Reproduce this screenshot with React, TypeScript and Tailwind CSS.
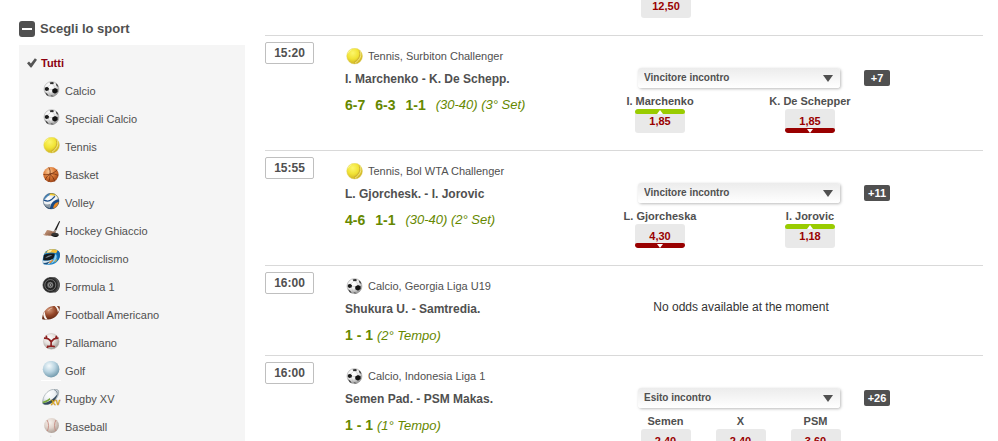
import { useId, useState, type ReactNode } from 'react';

function Icon({ children }: { children: ReactNode }) {
  return (
    <svg viewBox="0 0 20 20" className="h-5 w-5 shrink-0" aria-hidden="true">
      {children}
    </svg>
  );
}

function Shade({ id, from, mid, to }: { id: string; from: string; mid: string; to: string }) {
  return (
    <radialGradient id={id} cx="0.38" cy="0.3" r="0.75">
      <stop offset="0" stopColor={from} />
      <stop offset="0.5" stopColor={mid} />
      <stop offset="1" stopColor={to} />
    </radialGradient>
  );
}

function SoccerIcon() {
  const id = useId();
  return (
    <Icon>
      <Shade id={id} from="#ffffff" mid="#efefef" to="#8c8c8c" />
      <circle cx="10.5" cy="8.1" r="7.5" fill={`url(#${id})`} stroke="#9a9a9a" strokeWidth="0.5" />
      <path d="M3.8 6.8l2.4-1 1.8 1.4-.4 2.3-2.2.6-1.6-1z" fill="#1c1c1c" />
      <path d="M11.2 8.4l2.8-1.5 2.6 1.4v2.8l-2.7 1.6-2.6-1.5z" fill="#111" />
      <path d="M8.7 1.4l2.8-.5 1.7 1.1-1.5 1.3-2.4-.2z" fill="#2b2b2b" />
      <path d="M14.8 2.2l1.8 1.6.7 2.1-1.8-1.2z" fill="#333" />
      <path d="M4.2 11.2l2.2 1.8 1.3 2.1-2-.9z" fill="#333" />
      <path d="M9.4 14.2l2.2.3 1.2.9-2.3.2z" fill="#555" />
      <path d="M8 8.2l3.2.5M9.9 3.2L6.800 5.800M12.100 3.100L14 6.900M7.400 9.600l2 4.600M13.400 12.500l-1.600 2" stroke="#b5b5b5" strokeWidth="0.5" fill="none" />
    </Icon>
  );
}

function TennisIcon() {
  const id = useId();
  return (
    <Icon>
      <Shade id={id} from="#fcf66c" mid="#f1e335" to="#c9ab22" />
      <circle cx="10.6" cy="8.1" r="7.9" fill={`url(#${id})`} stroke="#ddd268" strokeWidth="0.4" />
      <path d="M15 2.6c1.900 3.600.8 8-4.900 11.600" fill="none" stroke="#c9ac31" strokeWidth="0.9" />
      <path d="M16 2.900c1.900 3.900.6 8.600-5 12.200" fill="none" stroke="#f6eda6" strokeWidth="0.7" />
      <path d="M3.900 5.400c.8-1.700 1.900-2.800 3.600-3.600" fill="none" stroke="#fbf8b0" strokeWidth="0.8" />
    </Icon>
  );
}

function BasketIcon() {
  const id = useId();
  return (
    <Icon>
      <Shade id={id} from="#fbcf9f" mid="#de7c38" to="#974015" />
      <circle cx="9.9" cy="9.6" r="7.7" fill={`url(#${id})`} />
      <path
        d="M2.500 9.500c4.500.8 9.500-.6 13.800-4.500M9.200 8.900c3-.4 5.500.2 8 1.600M8.900 9.200c2.500 2 4 4.300 4.800 7.300M8.500 9.300c-2 1.600-3.600 3.500-4.300 5.700M9 9c.4-2.400 0-4.600-1.200-6.600M9 9.500c0 2.500-.3 5-1.300 7.200"
        fill="none"
        stroke="#74300f"
        strokeWidth="0.8"
      />
    </Icon>
  );
}

function VolleyIcon() {
  const id = useId();
  return (
    <Icon>
      <Shade id={id} from="#ffffff" mid="#dde3e8" to="#7f8f9d" />
      <clipPath id={`${id}-ball`}>
        <circle cx="10.1" cy="8.1" r="8" />
      </clipPath>
      <g clipPath={`url(#${id}-ball)`}>
        <rect width="20" height="20" fill={`url(#${id})`} />
        <path d="M2 8C3 3 7-1 12 0L6.500 3.500z" fill="#4a86b8" />
        <path d="M9 0h7l3 6-2.500-1C14 2.500 11.500 2 8.500 2.500z" fill="#f6cb2d" />
        <path d="M3.500 6.500c2.500 1 4.200 1.200 6 .5l5-5 2.500 2.500-5.500 4.800C8.800 11 5 11 2.500 9.500z" fill="#f2f4f5" />
        <path d="M3 7.200c3 1.300 5.500 1.100 7.500-.6l3.500-3.300" fill="none" stroke="#1d4f8b" strokeWidth="1.300" />
        <path d="M9 16c0-5 3-9 9.500-10v4.500C15 11 13.500 13 13 16z" fill="#1b4c86" />
        <path d="M12.200 15.500c.2-3.500 1.800-6 6-6.800V13l-3.500 3z" fill="#ef8a1f" />
        <path d="M1.500 10c3 1.800 5.500 1.800 8 .8L8.500 17H4z" fill="#8e9aa5" />
        <path d="M4 12.800c1.600 1.600 3.600 2.400 6 2.200v2.200H6z" fill="#14355c" />
      </g>
      <circle cx="10.1" cy="8.1" r="7.8" fill="none" stroke="#34506f" strokeWidth="0.5" />
    </Icon>
  );
}

function HockeyIcon() {
  const id = useId();
  return (
    <Icon>
      <linearGradient id={id} x1="0" x2="1" y1="0" y2="1">
        <stop offset="0" stopColor="#cf9f82" />
        <stop offset="1" stopColor="#7c5039" />
      </linearGradient>
      <path d="M18.2 0l.9.5-4.900 11.200-1.700-.8z" fill="#1f1f1f" />
      <path d="M13.700 8.400l1.700.8-1.100 2.700-1.900-.8z" fill="#a99c92" />
      <path d="M3.300 13.500L6 9c2.800 0 5.200 1.600 8 1.700l-1 3.600c-3 1.100-6.400.4-9.700-.8z" fill={`url(#${id})`} />
      <path d="M1.900 12.600c1.200 1 2.900 1.300 4.600 1.500l-1 .7c-1.800 0-3-.7-3.600-2.200z" fill="#b98a6d" />
      <ellipse cx="14" cy="13.500" rx="3.600" ry="1.700" fill="#343434" />
      <path d="M10.400 13.600v.9c1.400 1.900 6 1.900 7.200-.1v-.8c-1.600 1.700-5.600 1.700-7.200 0z" fill="#111" />
    </Icon>
  );
}

function HelmetIcon() {
  return (
    <Icon>
      <path d="M1.900 14.400C1.300 11.500 2 7.400 3.300 4.600 4.500 2 7.500.4 11.500.3c4.600-.1 7.500 1.700 7.500 5.700 0 4.500-3.500 8.600-8.100 9.500-3.600.7-7.600.8-9-1.100z" fill="#1f86cb" />
      <path d="M3.300 4.600C4.500 2 7.500.4 11.500.3c2.200 0 4 .4 5.300 1.300l-1.500 2.600c-4-1.100-8-.6-12 .4z" fill="#f3bf3a" />
      <path d="M7 1.700c1.300-.7 2.700-1 4.300-1L9.500 3l-4 .8z" fill="#fbeeb0" />
      <path d="M4 3.300l2.500-1.900-.8 2.300z" fill="#2b7fbd" />
      <path d="M16.800 1.600c1.400.9 2.100 2.300 2.200 4-.1 2.600-1.100 4.900-2.800 6.700.8-3.800.5-6.600-.9-8.100z" fill="#1767a8" />
      <path d="M2.800 5.900c3.200-1.400 7.200-1.700 10.700-1.300.4 2.300-.7 4.600-2.600 5.700-2.600 1.300-5.800 1.500-8.700.9z" fill="#171a1d" />
      <path d="M4.200 8.900c1.700-2 4.100-2.900 7.100-3-1.600 1.200-3.900 2.500-7.100 3z" fill="#7e8b94" />
      <path d="M14.300 4.900c1.600 1.200 1.700 3.200.6 5.400-1.100 2.200-3 3.800-5 4.300 2-2.300 3.800-5.500 4.400-9.700z" fill="#8fd0f2" />
      <path d="M2 11.500c3.400.5 6.700.2 9.500-1.300-.4 2.200-1.800 3.900-4 5-2.300.4-4.500.2-5.500-.8z" fill="#d7e4ec" />
      <path d="M2.300 13.800c2.400.3 4.800-.2 7.200-2l-3.200 3.500c-1.700.2-3.200 0-4-.7z" fill="#174c7b" />
      <path d="M8 13.300l3.600-2.700.8.500-3.300 3.300z" fill="#f08b27" />
      <path d="M12.700 13.500l3.500-4.300-1 3z" fill="#f3bf3a" />
    </Icon>
  );
}

function WheelIcon() {
  return (
    <Icon>
      <path d="M8.200.3h5.600c3 1.100 5.100 4 5.100 7.600s-2.100 6.600-5.100 7.700H8.200z" fill="#3a3a3a" />
      <path d="M14.500 1.200c2 1.500 3.200 4 3.200 6.900s-1.200 5.400-3.200 6.900" fill="none" stroke="#6a6a6a" strokeWidth="0.7" />
      <circle cx="9.300" cy="8" r="7.500" fill="#262626" stroke="#555" strokeWidth="0.5" />
      <circle cx="9.300" cy="8" r="5.500" fill="none" stroke="#8e8e8e" strokeWidth="0.7" />
      <circle cx="9.300" cy="8" r="3.800" fill="#666" stroke="#161616" strokeWidth="0.9" />
      <circle cx="9.300" cy="8" r="2" fill="#2b2b2b" stroke="#b4b4b4" strokeWidth="0.6" />
      <circle cx="9.300" cy="8" r="0.7" fill="#ddd" />
    </Icon>
  );
}

function FootballIcon() {
  const id = useId();
  return (
    <Icon>
      <Shade id={id} from="#d59a7b" mid="#96482a" to="#57200d" />
      <path d="M1.200 14.300C.9 8.500 5 2 11.300 1.200c2.700-.3 5.300-.3 7.500.3.3 5.800-3.500 11.600-9.400 12.700-2.800.5-6 .7-8.200.1z" fill={`url(#${id})`} />
      <path d="M3.800 6.400c.1 3.200 1 5.900 2.900 8l-2.300.2C2.900 12.600 2.200 10.800 2.200 9z" fill="#f9f5f1" />
      <path d="M13.600 1.100c1.900 1.500 3 3.600 3.300 6.300l1.200-2.200c-.4-1.800-1.100-3.100-2.300-4.100z" fill="#f9f5f1" />
      <path d="M7.300 5.600c1.200-1.500 2.600-2.300 4.100-2.600" stroke="#efc9b4" strokeWidth="0.8" fill="none" />
    </Icon>
  );
}

function HandballIcon() {
  const id = useId();
  return (
    <Icon>
      <Shade id={id} from="#ffffff" mid="#e3deda" to="#97908b" />
      <circle cx="10.300" cy="8.400" r="7.900" fill={`url(#${id})`} stroke="#bbb3ad" strokeWidth="0.4" />
      <path
        d="M3 5.200c2.800-.2 5.600 1.100 7.200 3.800 1.500-2.700 4.100-4 7.200-3.900M10.200 9c-.2 1.700-.2 3.200.1 4.800M6 15l1.200-2.300M7 13.700c2-.9 4.700-.9 6.800 0M5.200 2.600l.6 2.600M15.600 2.700l-.9 2.500"
        fill="none"
        stroke="#8e1f1f"
        strokeWidth="1.6"
      />
    </Icon>
  );
}

function GolfIcon() {
  const id = useId();
  return (
    <Icon>
      <Shade id={id} from="#f4fafc" mid="#b8d3e0" to="#6a93a6" />
      <circle cx="10.1" cy="8.2" r="8.3" fill={`url(#${id})`} />
      <rect y="19" width="20" height="1" fill="#fff" />
    </Icon>
  );
}

function RugbyIcon() {
  const id = useId();
  return (
    <Icon>
      <Shade id={id} from="#ffffff" mid="#eef1f4" to="#9fadb8" />
      <path d="M1.600 14.400C1.200 8.400 5.600 1 12.500.3c2.700-.3 4.800.2 5.100 1.600.9 4.900-3.600 10.900-9 13-2.600 1-5.600 1.100-7-.5z" fill={`url(#${id})`} stroke="#7d8a92" strokeWidth="0.5" />
      <path d="M1.800 14.200c5.700-.7 11.400-4.400 14.900-9.500-.6 4.100-4.100 8.300-8.300 10.200-2.300.9-5.200 1-6.600-.7z" fill="#33485c" />
      <path d="M1.700 12.700c2.600-.6 5-1.900 7-3.700l.7 1.400c-2.200 2-4.600 3.300-7.500 3.900z" fill="#76a83a" />
      <path d="M13.300.8c1.700.7 2.800 2 3 3.800" fill="none" stroke="#51626f" strokeWidth="0.700" />
      <text x="10" y="16" fontSize="7" fontWeight="700" fontFamily="Liberation Sans, sans-serif" fill="#f5c21f" stroke="#a56c00" strokeWidth="0.300">
        XV
      </text>
    </Icon>
  );
}

function BaseballIcon() {
  const id = useId();
  return (
    <Icon>
      <Shade id={id} from="#f7f1ec" mid="#dfd3cb" to="#a99a91" />
      <circle cx="10.500" cy="8.500" r="7.400" fill={`url(#${id})`} />
      <path d="M6 3c1.900 3 2 7.500.4 11M15 3c-1.900 3-1.900 7.500-.3 11" fill="none" stroke="#c58a80" strokeWidth="0.9" />
      <circle cx="9.800" cy="19.200" r="0.600" fill="#d5d5d5" />
    </Icon>
  );
}

const sports = [
  { name: 'Calcio', icon: SoccerIcon },
  { name: 'Speciali Calcio', icon: SoccerIcon },
  { name: 'Tennis', icon: TennisIcon },
  { name: 'Basket', icon: BasketIcon },
  { name: 'Volley', icon: VolleyIcon },
  { name: 'Hockey Ghiaccio', icon: HockeyIcon },
  { name: 'Motociclismo', icon: HelmetIcon },
  { name: 'Formula 1', icon: WheelIcon },
  { name: 'Football Americano', icon: FootballIcon },
  { name: 'Pallamano', icon: HandballIcon },
  { name: 'Golf', icon: GolfIcon },
  { name: 'Rugby XV', icon: RugbyIcon },
  { name: 'Baseball', icon: BaseballIcon },
];

type Odd = { label: string; value: string; trend?: 'up' | 'down' };

type Match = {
  id: number;
  time: string;
  icon: () => ReactNode;
  league: string;
  teams: string;
  score: string[];
  phase: string;
  market?: string;
  more?: string;
  odds: Odd[];
};

const matches: Match[] = [
  {
    id: 1,
    time: '15:20',
    icon: TennisIcon,
    league: 'Tennis, Surbiton Challenger',
    teams: 'I. Marchenko - K. De Schepp.',
    score: ['6-7', '6-3', '1-1'],
    phase: '(30-40) (3° Set)',
    market: 'Vincitore incontro',
    more: '+7',
    odds: [
      { label: 'I. Marchenko', value: '1,85', trend: 'up' },
      { label: 'K. De Schepper', value: '1,85', trend: 'down' },
    ],
  },
  {
    id: 2,
    time: '15:55',
    icon: TennisIcon,
    league: 'Tennis, Bol WTA Challenger',
    teams: 'L. Gjorchesk. - I. Jorovic',
    score: ['4-6', '1-1'],
    phase: '(30-40) (2° Set)',
    market: 'Vincitore incontro',
    more: '+11',
    odds: [
      { label: 'L. Gjorcheska', value: '4,30', trend: 'down' },
      { label: 'I. Jorovic', value: '1,18', trend: 'up' },
    ],
  },
  {
    id: 3,
    time: '16:00',
    icon: SoccerIcon,
    league: 'Calcio, Georgia Liga U19',
    teams: 'Shukura U. - Samtredia.',
    score: ['1 - 1'],
    phase: '(2° Tempo)',
    odds: [],
  },
  {
    id: 4,
    time: '16:00',
    icon: SoccerIcon,
    league: 'Calcio, Indonesia Liga 1',
    teams: 'Semen Pad. - PSM Makas.',
    score: ['1 - 1'],
    phase: '(1° Tempo)',
    market: 'Esito incontro',
    more: '+26',
    odds: [
      { label: 'Semen', value: '2,40' },
      { label: 'X', value: '2,40' },
      { label: 'PSM', value: '3,60' },
    ],
  },
];

function Sidebar() {
  const [open, setOpen] = useState(true);

  return (
    <aside className="w-[226px] shrink-0 pt-[21px]">
      <button onClick={() => setOpen(!open)} className="flex h-4 items-center gap-[5px] text-[13px] font-bold">
        <span className="flex h-4 w-4 items-center justify-center rounded-[3px] bg-[#505050]">
          <span className="h-0.5 w-[10px] bg-white" />
        </span>
        Scegli lo sport
      </button>
      {open && (
        <ul className="mt-2 bg-[#f5f5f5] pt-1 text-[11px]">
          <li>
            <a href="#tutti" className="flex h-7 items-center gap-1 pl-2 font-bold text-[#8c0010]">
              <svg viewBox="0 0 10 10" className="h-[10px] w-[10px]" aria-hidden="true">
                <path d="M0 5.300L2 3.500l1.900 2L7.900.3l2.100 1.500L4.500 9.600H3.600z" fill="#555" />
              </svg>
              Tutti
            </a>
          </li>
          {sports.map(({ name, icon: SportIcon }) => (
            <li key={name}>
              <a href={`#${name}`} className="flex h-7 items-center gap-1 pl-[22px]">
                <SportIcon />
                {name}
              </a>
            </li>
          ))}
        </ul>
      )}
    </aside>
  );
}

function OddButton({ label, value, trend }: Odd) {
  return (
    <div className="flex flex-col items-center">
      <span className="h-4 text-[11px] leading-4 font-bold whitespace-nowrap">{label}</span>
      <button
        aria-label={`${label} ${value}`}
        className="flex h-6 w-[50px] flex-col items-center justify-between overflow-hidden rounded-[3px] bg-[#e9e9e9] text-[11px] leading-[14px] font-bold text-[#990000]"
      >
        <span className={`flex h-[5px] w-full items-end justify-center rounded-[2px] ${trend === 'up' ? 'bg-[#99cc00]' : ''}`}>
          {trend === 'up' && (
            <svg viewBox="0 0 6 4" className="h-1 w-[6px]" aria-hidden="true">
              <path d="M0 4L3 0l3 4z" fill="#fff" />
            </svg>
          )}
        </span>
        {value}
        <span className={`flex h-[5px] w-full items-start justify-center rounded-[2px] ${trend === 'down' ? 'bg-[#990000]' : ''}`}>
          {trend === 'down' && (
            <svg viewBox="0 0 6 4" className="mt-px h-1 w-[6px]" aria-hidden="true">
              <path d="M0 0h6L3 4z" fill="#fff" />
            </svg>
          )}
        </span>
      </button>
    </div>
  );
}

function Market({ match }: { match: Match }) {
  if (!match.market) {
    return <p className="w-[312px] pt-[33px] text-center text-[12px] leading-4 text-[#333333]">No odds available at the moment</p>;
  }

  return (
    <div className="pt-8">
      <div className="flex items-center gap-6 pl-[53px]">
        <div className="relative w-[202px]">
          <select
            aria-label="Mercato"
            className="block h-5 w-full appearance-none rounded-[3px] bg-linear-to-b from-[#ececec] to-white pb-[2px] pl-[6px] text-[10px] font-bold shadow-[1px_1px_3px_#bbbbbb]"
          >
            <option>{match.market}</option>
          </select>
          <svg viewBox="0 0 10 7" className="pointer-events-none absolute top-[7px] right-[7px] h-[7px] w-[10px]" aria-hidden="true">
            <path d="M0 0h10L5 7z" fill="#505050" />
          </svg>
        </div>
        <button className="h-4 w-[26px] rounded-[2px] bg-[#505050] text-[11px] leading-4 font-bold text-white">{match.more}</button>
      </div>
      <div className={match.odds.length === 3 ? 'mt-[5px] ml-[43px] grid w-[225px] grid-cols-3' : 'mt-[5px] grid w-[300px] grid-cols-2'}>
        {match.odds.map((odd) => (
          <OddButton key={odd.label} {...odd} />
        ))}
      </div>
    </div>
  );
}

function MatchRow({ match }: { match: Match }) {
  const SportIcon = match.icon;

  return (
    <li className={`flex border-t border-[#d9d9d9] ${match.market ? 'min-h-[115px]' : 'min-h-[90px]'}`}>
      <div className="w-[79px] shrink-0 pt-[6px]">
        <time className="flex h-[22px] w-[49px] items-center justify-center rounded-[2px] border border-[#bfbfbf] text-[12px] font-bold">
          {match.time}
        </time>
      </div>
      <div className="flex-1 pt-3">
        <div className="flex h-5 gap-1 text-[11px] leading-4">
          <SportIcon />
          {match.league}
        </div>
        <h3 className="mt-[3px] pl-px text-[12px] leading-4 font-bold">{match.teams}</h3>
        <p className="mt-[10px] flex gap-[10px] pl-px text-[14px] leading-4 text-[#668800]">
          {match.score.length > 1 ? (
            <>
              {match.score.map((set, i) => (
                <b key={i}>{set}</b>
              ))}
              <i className="text-[13px]">{match.phase}</i>
            </>
          ) : (
            <span>
              <b>{match.score[0]}</b> <i className="text-[13px]">{match.phase}</i>
            </span>
          )}
        </p>
      </div>
      <div className="w-[398px] shrink-0">
        <Market match={match} />
      </div>
    </li>
  );
}

export default function App() {
  return (
    <div className="flex h-screen gap-5 overflow-hidden bg-white pr-[15px] pl-[19px] font-['Liberation_Sans',Arial,sans-serif] text-[#505050]">
      <Sidebar />
      <main className="min-w-0 flex-1">
        <div className="flex h-[35px] justify-end">
          <div className="w-[342px]">
            <button className="flex h-[18px] w-[50px] items-start justify-center rounded-b-[3px] bg-[#e9e9e9] text-[11px] leading-[13px] font-bold text-[#990000]">
              12,50
            </button>
          </div>
        </div>
        <ul>
          {matches.map((match) => (
            <MatchRow key={match.id} match={match} />
          ))}
        </ul>
      </main>
    </div>
  );
}
